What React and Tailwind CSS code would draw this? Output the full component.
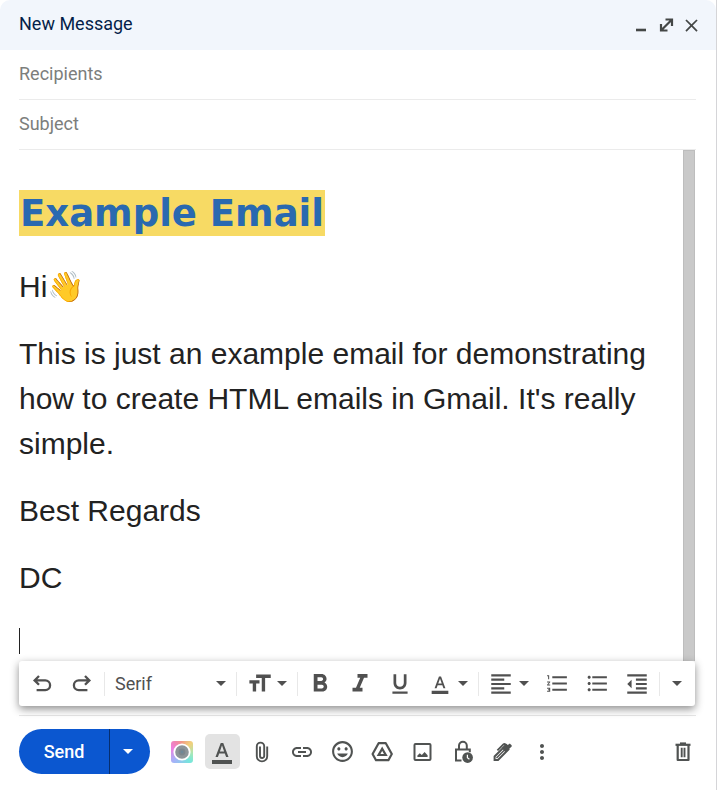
import React, { useState } from 'react';
import {
  MdClose,
  MdFormatAlignLeft,
  MdFormatBold,
  MdFormatColorText,
  MdFormatIndentDecrease,
  MdFormatItalic,
  MdFormatListBulleted,
  MdFormatListNumbered,
  MdFormatSize,
  MdFormatUnderlined,
  MdInsertEmoticon,
  MdInsertLink,
  MdMoreVert
} from 'react-icons/md';

const Svg = ({ children, className = 'h-6 w-6' }) => (
  <svg viewBox="0 0 24 24" fill="none" stroke="currentColor" strokeWidth="2" className={className} aria-hidden="true">
    {children}
  </svg>
);

const Caret = () => (
  <svg viewBox="0 0 10 5" fill="currentColor" className="h-[5px] w-[10px] shrink-0" aria-hidden="true">
    <path d="M0 0h10L5 5z" />
  </svg>
);

const MinimizeIcon = () => (
  <Svg>
    <path d="M6 17h10" strokeWidth="2.6" />
  </Svg>
);

const ExpandIcon = () => (
  <Svg>
    <path d="M10.5 6.500h6.500v6.500M17 6.500L6 17.500M6 11v6.500h6.500" strokeWidth="2.200" />
  </Svg>
);

const UndoIcon = ({ className }) => (
  <Svg className={className}>
    <path d="M9 4L4.600 8.400 9 12.800M5 8.400h10.200a4.900 4.900 0 0 1 0 9.800H6.600" strokeWidth="2.300" />
  </Svg>
);

const CameraIcon = () => (
  <span className="flex h-[22px] w-[22px] items-center justify-center rounded-[3px] bg-[conic-gradient(from_0deg,#f29a84,#f2d07c_45deg,#a5e8b8_100deg,#76e6dc_140deg,#a3b4f8_220deg,#ee7fe2_290deg,#f285ac_330deg,#f29a84)]">
    <svg viewBox="0 0 18 18" className="h-[18px] w-[18px]" aria-hidden="true">
      <circle cx="9" cy="9" r="7.7" fill="#8d9499" stroke="#fff" strokeWidth="1.8" />
      <circle cx="9" cy="9" r="3.4" fill="#7d868d" />
      <circle cx="9" cy="9" r="1.4" fill="#6e8798" />
    </svg>
  </span>
);

const ClipIcon = () => (
  <Svg>
    <path d="M17.200 6.500v9.700a5.200 5.200 0 0 1-10.400 0V6.300a3.700 3.700 0 0 1 7.400 0v9.600a2.100 2.100 0 0 1-4.200 0V6.500" strokeWidth="1.900" />
  </Svg>
);

const DriveIcon = () => (
  <Svg>
    <path d="M8.600 3.200h7.200l6 10.800-3.400 6.200H6L2.600 14z" strokeWidth="2.200" strokeLinejoin="round" />
    <path d="M12.200 8.800l3.600 6.200H8.600z" strokeWidth="2.200" />
  </Svg>
);

const ImageIcon = () => (
  <Svg>
    <rect x="4.500" y="4" width="16" height="16" rx="1" />
    <path d="M7.400 17v-1.400l2.400-2.400 2 1.800 2.800-3 3 3.200V17z" fill="currentColor" stroke="none" />
  </Svg>
);

const LockClockIcon = () => (
  <Svg>
    <path d="M9 9V5.600a3.900 3.900 0 0 1 7.800 0V9" />
    <path d="M11.500 20.500H6V9.500h13.800v2.700" />
    <circle cx="17.600" cy="17.600" r="5.300" fill="currentColor" stroke="none" />
    <path d="M17.400 14.800v3l2 1.400" stroke="#fff" strokeWidth="1.200" />
  </Svg>
);

const PenIcon = () => (
  <Svg>
    <path d="M4.600 19.900v-3.400L15 6.100l3.400 3.400L8 19.900z" />
    <path d="M6.500 18L15 9.500" strokeWidth="1.400" />
    <path d="M11.800 8l4.400-4.200 1.600 1.200 1-.8c.6-.6 1.200-.4 1.700 0l.9.900c.5.600.5 1.200 0 1.700L15.600 12.400z" fill="currentColor" stroke="none" />
    <path d="M7.400 10.400l6-6c.6-.6 1.400-.6 2 0l1.200 1.200" strokeWidth="1.900" />
  </Svg>
);

const TrashIcon = () => (
  <Svg>
    <path d="M4.500 4.800h15" strokeWidth="2.200" />
    <path d="M9 3.400h6" />
    <path d="M6.700 5v15h10.800V5" strokeWidth="2.200" strokeLinejoin="round" />
    <path d="M10.700 7.800v9.400M13.500 7.800v9.400" strokeWidth="1.900" />
  </Svg>
);

const ToolButton = ({ label, children, onClick }) => (
  <button type="button" aria-label={label} onClick={onClick} className="flex h-full w-10 shrink-0 items-center justify-center">
    {children}
  </button>
);

const MenuButton = ({ label, children }) => (
  <button type="button" aria-label={label} className="flex h-full w-14 shrink-0 items-center pl-0.5">
    <span className="flex w-9 justify-center">{children}</span>
    <Caret />
  </button>
);

const Separator = () => <div className="mx-0.5 h-6 w-px shrink-0 bg-[#e8e8e8]" />;

const FormattingBar = () => (
  <div className="relative z-10 mr-[21px] ml-[19px] flex h-[45px] items-center rounded-[3px] bg-white pl-[3px] text-[#505050] shadow-[0_3px_8px_rgba(0,0,0,0.45)]">
    <ToolButton label="Undo"><UndoIcon /></ToolButton>
    <ToolButton label="Redo"><UndoIcon className="h-6 w-6 -scale-x-100" /></ToolButton>
    <Separator />
    <label className="flex min-w-0 flex-[0_1_127px] items-center pr-2 pl-2">
      <select aria-label="Font" defaultValue="Serif" className="min-w-0 flex-1 appearance-none bg-transparent text-[18px] leading-6 outline-none">
        <option>Serif</option>
        <option>Sans Serif</option>
        <option>Fixed Width</option>
      </select>
      <Caret />
    </label>
    <Separator />
    <MenuButton label="Size"><MdFormatSize size={27} /></MenuButton>
    <Separator />
    <ToolButton label="Bold"><MdFormatBold size={30} /></ToolButton>
    <ToolButton label="Italic"><MdFormatItalic size={30} /></ToolButton>
    <ToolButton label="Underline"><MdFormatUnderlined size={26} /></ToolButton>
    <MenuButton label="Text color"><MdFormatColorText size={20} /></MenuButton>
    <Separator />
    <MenuButton label="Align"><MdFormatAlignLeft size={26} /></MenuButton>
    <ToolButton label="Numbered list"><MdFormatListNumbered size={25} /></ToolButton>
    <ToolButton label="Bulleted list"><MdFormatListBulleted size={25} /></ToolButton>
    <ToolButton label="Indent less"><MdFormatIndentDecrease size={26} /></ToolButton>
    <Separator />
    <button type="button" aria-label="More formatting options" className="flex h-full flex-1 items-center justify-center pr-1">
      <Caret />
    </button>
  </div>
);

const SendBar = ({ showFormatting, onToggleFormatting }) => (
  <div className="flex items-center bg-white pt-[13px] pr-[21px] pb-4 pl-[19px] text-[#505352]">
    <div className="flex h-[45px] shrink-0 overflow-hidden rounded-full bg-[#0b57d0] text-white">
      <button type="button" className="w-[90px] text-[18px] font-medium">Send</button>
      <button type="button" aria-label="More send options" className="flex w-[41px] items-center justify-center border-l border-[#062e6f] pr-1">
        <Caret />
      </button>
    </div>
    <div className="ml-3 flex h-[35px] flex-1 items-center">
      <ToolButton label="Record video"><CameraIcon /></ToolButton>
      <ToolButton label="Formatting options" onClick={onToggleFormatting}>
        <span className={`flex h-[35px] w-[35px] items-center justify-center rounded-[5px] ${showFormatting ? 'bg-[#e3e3e3]' : ''}`}>
          <MdFormatColorText size={24} />
        </span>
      </ToolButton>
      <ToolButton label="Attach files"><ClipIcon /></ToolButton>
      <ToolButton label="Insert link"><MdInsertLink size={24} /></ToolButton>
      <ToolButton label="Insert emoji"><MdInsertEmoticon size={25} /></ToolButton>
      <ToolButton label="Insert files using Drive"><DriveIcon /></ToolButton>
      <ToolButton label="Insert photo"><ImageIcon /></ToolButton>
      <ToolButton label="Toggle confidential mode"><LockClockIcon /></ToolButton>
      <ToolButton label="Insert signature"><PenIcon /></ToolButton>
      <ToolButton label="More options"><MdMoreVert size={24} /></ToolButton>
    </div>
    <button type="button" aria-label="Discard draft"><TrashIcon /></button>
  </div>
);

const App = () => {
  const [showFormatting, setShowFormatting] = useState(true);

  return (
    <div className="flex min-h-screen flex-col border-r border-[#d5d5d8] bg-white font-['Roboto',sans-serif]">
      <header className="flex h-[50px] shrink-0 items-center justify-between rounded-t-[10px] bg-[#f2f6fc] pr-3 pb-0.5 pl-[19px]">
        <h1 className="text-[18px] leading-6 text-[#041e49]">New Message</h1>
        <div className="flex pt-0.5 text-[#444746]">
          <button type="button" aria-label="Minimize" className="flex w-[25px] justify-center"><MinimizeIcon /></button>
          <button type="button" aria-label="Full screen" className="flex w-[25px] justify-center"><ExpandIcon /></button>
          <button type="button" aria-label="Close" className="flex w-[25px] items-center justify-center"><MdClose size={21} /></button>
        </div>
      </header>

      <div className="mr-[20px] ml-[19px]">
        <input
          type="text"
          aria-label="Recipients"
          placeholder="Recipients"
          className="block h-[50px] w-full border-b border-[#ebebeb] pb-0.5 text-[18px] outline-none placeholder:text-[#7c7e7c]"
        />
        <input
          type="text"
          aria-label="Subject"
          placeholder="Subject"
          className="block h-[50px] w-full border-b border-[#ebebeb] pb-0.5 text-[18px] outline-none placeholder:text-[#7c7e7c]"
        />
      </div>

      <div className="mr-[21px] ml-[19px] flex flex-1">
        <div
          role="textbox"
          aria-label="Message Body"
          className="flex min-w-0 flex-1 flex-col gap-[22px] pt-10 pr-4 font-['Liberation_Sans',Arial,sans-serif] text-[30px] leading-[45px] text-[#222]"
        >
          <h2 className="mb-1.5 flex font-['DejaVu_Sans',Verdana,sans-serif] text-[37px] leading-[45px] font-bold text-[#2969b0]">
            <span className="bg-[#f7da64] px-px pt-px">Example Email</span>
          </h2>
          <p>Hi👋</p>
          <p>This is just an example email for demonstrating how to create HTML emails in Gmail. It's really simple.</p>
          <p>Best Regards</p>
          <p>DC</p>
          <div className="mt-1.5 h-[26px] w-px bg-[#222]" />
        </div>
        <div className="w-3 border border-b-0 border-[#bdbdbd] bg-[#c9c9c9]" />
      </div>

      {showFormatting && <FormattingBar />}
      <div className="mr-[20px] ml-[19px] h-[10px] border-b border-[#e6e6e6]" />
      <SendBar showFormatting={showFormatting} onToggleFormatting={() => setShowFormatting(!showFormatting)} />
    </div>
  );
};

export default App;
